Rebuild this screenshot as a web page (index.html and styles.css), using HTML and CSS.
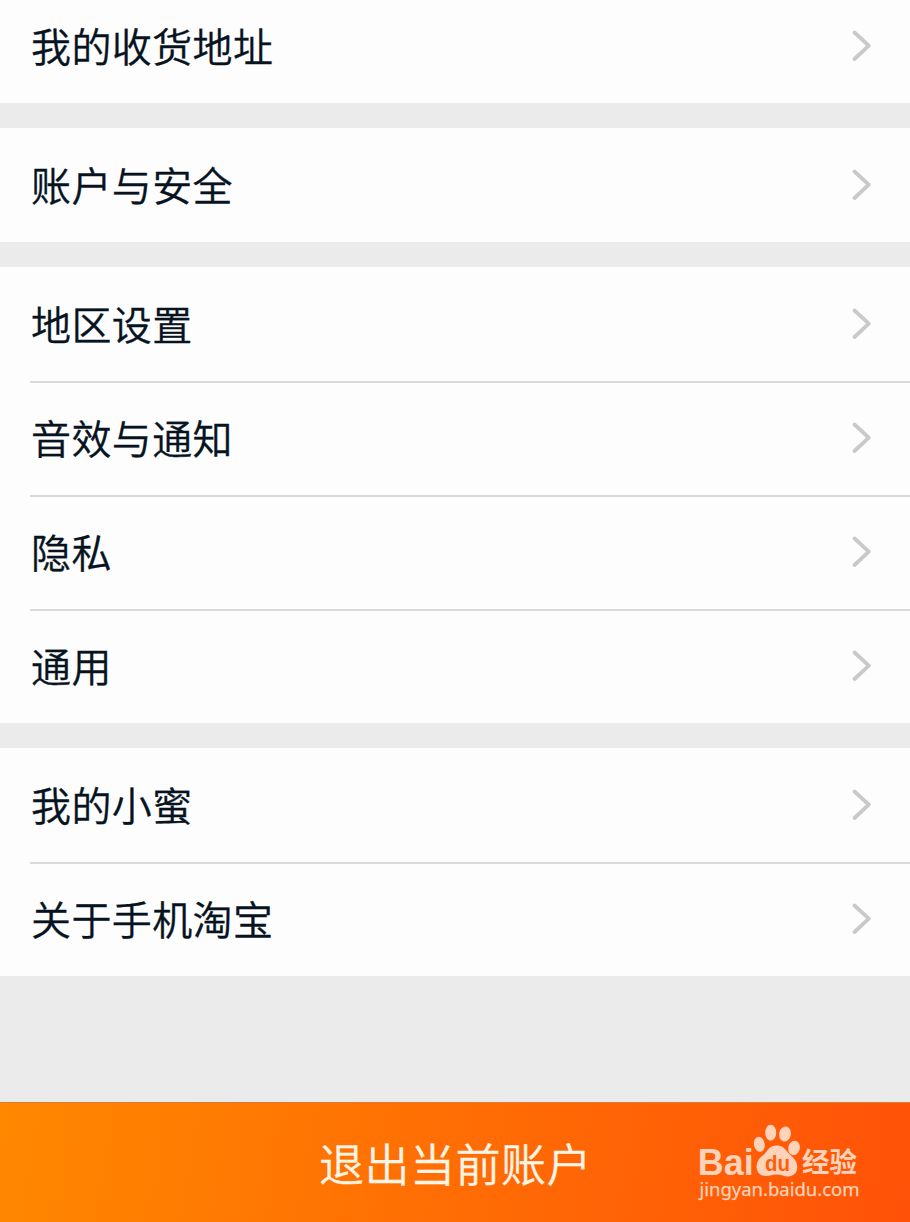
FILE: index.html
```html
<!DOCTYPE html>
<html lang="zh-CN">
<head>
<meta charset="utf-8">
<title>设置</title>
<link rel="stylesheet" href="styles.css">
</head>
<body>
<svg class="defs" width="0" height="0" aria-hidden="true">
  <symbol id="chevron" viewBox="0 0 22 34"><path d="M3.500 3.500 L17.800 16.700 L3.500 30"/></symbol>
</svg>
<main class="settings">
  <section class="group group-top">
    <div class="row"><span class="label">我的收货地址</span><svg class="chevron"><use href="#chevron"/></svg></div>
  </section>
  <section class="group">
    <div class="row"><span class="label">账户与安全</span><svg class="chevron"><use href="#chevron"/></svg></div>
  </section>
  <section class="group">
    <div class="row"><span class="label">地区设置</span><svg class="chevron"><use href="#chevron"/></svg></div>
    <div class="row"><span class="label">音效与通知</span><svg class="chevron"><use href="#chevron"/></svg></div>
    <div class="row"><span class="label">隐私</span><svg class="chevron"><use href="#chevron"/></svg></div>
    <div class="row"><span class="label">通用</span><svg class="chevron"><use href="#chevron"/></svg></div>
  </section>
  <section class="group">
    <div class="row"><span class="label">我的小蜜</span><svg class="chevron"><use href="#chevron"/></svg></div>
    <div class="row"><span class="label">关于手机淘宝</span><svg class="chevron"><use href="#chevron"/></svg></div>
  </section>
  <div class="logout">
    <span class="logout-text">退出当前账户</span>
    <svg class="watermark" viewBox="0 0 180 92">
      <text class="wm-latin" x="7.700" y="57.500" textLength="56" lengthAdjust="spacingAndGlyphs">Bai</text>
      <ellipse cx="69.300" cy="27.300" rx="5.400" ry="7.600" transform="rotate(-10 69.300 27.300)"/>
      <ellipse cx="80.700" cy="15.700" rx="5.500" ry="8"/>
      <ellipse cx="95" cy="17" rx="5.900" ry="7.600" transform="rotate(10 95 17)"/>
      <ellipse cx="104" cy="31" rx="5.800" ry="7.300" transform="rotate(14 104 31)"/>
      <path d="M87 28.500 C78 28.500 78 35 71 40 C64 46 65 59 76 59 C80 59 83 57.500 87 57.500 C91 57.500 94 59.500 98 59.500 C109 59.500 110 46 102.500 40 C96 35 95 28.500 87 28.500Z"/>
      <text class="wm-du" x="75" y="53.700" textLength="25" lengthAdjust="spacingAndGlyphs">du</text>
      <text class="wm-cjk" x="112" y="55" textLength="55" lengthAdjust="spacingAndGlyphs">经验</text>
      <text class="wm-url" x="9.500" y="79" textLength="160" lengthAdjust="spacingAndGlyphs">jingyan.baidu.com</text>
    </svg>
  </div>
</main>
</body>
</html>
```
FILE: styles.css
```css
body {
  margin: 0;
  background: #ebebeb;
  font-family: "Noto Sans CJK SC", sans-serif;
}

.defs {
  display: block;
}

.settings {
  display: flex;
  flex-direction: column;
  height: 1222px;
  overflow: hidden;
}

.group {
  flex: none;
  margin-bottom: 25px;
  background: #fdfdfd;
}

.group-top {
  margin-top: -11px;
}

.row {
  display: flex;
  align-items: center;
  justify-content: space-between;
  box-sizing: border-box;
  height: 114px;
  margin-left: 30px;
  padding: 0 37px 0 1px;
}

.row + .row {
  background: linear-gradient(#dadadc, #dadadc) top / 100% 2px no-repeat;
}

.label {
  padding-bottom: 2px;
  color: #07131f;
  font-size: 40px;
  font-weight: 350;
  line-height: 58px;
  letter-spacing: 0.4px;
  -webkit-text-stroke: 0.35px #07131f;
}

.chevron {
  width: 22px;
  height: 34px;
  fill: none;
  stroke: #c9c9c9;
  stroke-width: 3.8;
  stroke-linecap: round;
  stroke-linejoin: round;
}

.logout {
  position: relative;
  display: flex;
  align-items: center;
  justify-content: center;
  box-sizing: border-box;
  height: 120px;
  margin-top: auto;
  border-top: 1px solid #dc7a38;
  background: linear-gradient(100deg, #ff8800, #ff5208);
}

.logout-text {
  padding-left: 1px;
  color: #fff5e6;
  font-size: 45px;
  font-weight: 350;
  line-height: 60px;
  letter-spacing: 0.5px;
  -webkit-text-stroke: 0.3px #fff5e6;
}

.watermark {
  position: absolute;
  top: 14px;
  left: 690px;
  width: 180px;
  height: 92px;
  fill: #ffd2ba;
}

.wm-latin {
  font: bold 36px "Liberation Sans", sans-serif;
}

.wm-du {
  fill: #ff5e0a;
  font: bold 22px "Liberation Sans", sans-serif;
}

.wm-cjk {
  font: bold 27px "Noto Sans CJK SC", sans-serif;
}

.wm-url {
  font: 18.5px "Noto Sans", sans-serif;
  stroke: #ffd2ba;
  stroke-width: 0.25;
}
```
